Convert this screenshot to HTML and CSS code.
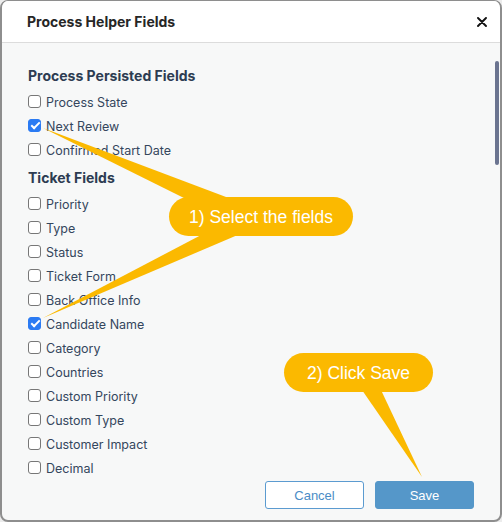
FILE: index.html
```html
<!DOCTYPE html>
<html>
<head>
<meta charset="utf-8">
<link rel="stylesheet" href="styles.css">
</head>
<body>
<div class="dialog">
  <div class="header">
    <span class="title">Process Helper Fields</span>
    <svg class="close" width="10" height="10" viewBox="0 0 10 10"><path d="M1 1L9 9M9 1L1 9" stroke="#111" stroke-width="1.9" stroke-linecap="round"/></svg>
  </div>
  <div class="content">
    <h3 class="section">Process Persisted Fields</h3>
    <label class="row"><input type="checkbox" class="cb"><span>Process State</span></label>
    <label class="row"><input type="checkbox" class="cb" checked><span>Next Review</span></label>
    <label class="row"><input type="checkbox" class="cb"><span>Confirmed Start Date</span></label>
    <h3 class="section second">Ticket Fields</h3>
    <label class="row"><input type="checkbox" class="cb"><span>Priority</span></label>
    <label class="row"><input type="checkbox" class="cb"><span>Type</span></label>
    <label class="row"><input type="checkbox" class="cb"><span>Status</span></label>
    <label class="row"><input type="checkbox" class="cb"><span>Ticket Form</span></label>
    <label class="row"><input type="checkbox" class="cb"><span>Back Office Info</span></label>
    <label class="row"><input type="checkbox" class="cb" checked><span>Candidate Name</span></label>
    <label class="row"><input type="checkbox" class="cb"><span>Category</span></label>
    <label class="row"><input type="checkbox" class="cb"><span>Countries</span></label>
    <label class="row"><input type="checkbox" class="cb"><span>Custom Priority</span></label>
    <label class="row"><input type="checkbox" class="cb"><span>Custom Type</span></label>
    <label class="row"><input type="checkbox" class="cb"><span>Customer Impact</span></label>
    <label class="row"><input type="checkbox" class="cb"><span>Decimal</span></label>
  </div>
  <div class="footer">
    <button class="btn cancel">Cancel</button>
    <button class="btn save">Save</button>
  </div>
  <div class="scrollbar"></div>
</div>
<svg class="callouts" width="502" height="522" viewBox="0 0 502 522">
  <g fill="#fbb900">
    <polygon points="43,128 234,200 188,200"/>
    <polygon points="43,318 203,234 240,234"/>
    <rect x="169" y="197" width="184" height="39" rx="19.5"/>
    <polygon points="362,390 381,390 422,477"/>
    <rect x="284" y="353" width="149" height="39" rx="19.5"/>
  </g>
  <text x="261" y="222.5" class="ctext">1) Select the fields</text>
  <text x="358.5" y="378.5" class="ctext">2) Click Save</text>
</svg>
</body>
</html>
```

FILE: styles.css
```css
html, body {
  margin: 0;
  padding: 0;
  background: #ececec;
}
body {
  width: 502px;
  height: 522px;
  position: relative;
  overflow: hidden;
  font-family: "Inter", "Liberation Sans", sans-serif;
}
.dialog {
  width: 502px;
  height: 522px;
  box-sizing: border-box;
  border: 2px solid #8e8e8e;
  border-top-width: 1px;
  border-radius: 8px;
  background: #f7f8f8;
  display: flex;
  flex-direction: column;
  overflow: hidden;
  position: relative;
}
.header {
  height: 41px;
  flex: none;
  background: #fff;
  border-bottom: 1px solid #dcdcdc;
  display: flex;
  align-items: center;
  justify-content: space-between;
  padding: 0 13px 0 25px;
}
.title {
  font-size: 14px;
  font-weight: 700;
  color: #262626;
}
.close {
  display: block;
  margin-top: 1px;
}
.content {
  flex: 1;
  overflow: hidden;
  padding: 23px 26px 0 26px;
  min-height: 0;
}
.section {
  margin: 0 0 4px 0;
  height: 20px;
  line-height: 20px;
  font-size: 14px;
  font-weight: 700;
  color: #2d3c52;
}
.section.second {
  margin-top: 6px;
}
.row {
  display: flex;
  align-items: center;
  height: 24px;
  gap: 5px;
  font-size: 12.5px;
  color: #34465d;
}
.cb {
  appearance: none;
  -webkit-appearance: none;
  margin: 0;
  width: 13px;
  height: 13px;
  box-sizing: border-box;
  border: 1px solid #777;
  border-radius: 3px;
  background: #fff;
  flex: none;
  position: relative;
  top: -1px;
}
.cb:checked {
  background: #2b7bf3;
  border-color: #2b7bf3;
}
.cb:checked::after {
  content: "";
  position: absolute;
  left: 3.5px;
  top: 0.5px;
  width: 3px;
  height: 7px;
  border-right: 2px solid #fff;
  border-bottom: 2px solid #fff;
  transform: rotate(45deg);
}
.footer {
  height: 42px;
  flex: none;
  display: flex;
  justify-content: flex-end;
  align-items: flex-start;
  gap: 11px;
  padding: 3px 26px 0 0;
  box-sizing: border-box;
}
.btn {
  width: 99px;
  height: 28px;
  border-radius: 3px;
  font-family: "Liberation Sans", "Inter", sans-serif;
  font-size: 13px;
  box-sizing: border-box;
  padding: 0;
}
.cancel {
  background: #fff;
  border: 1px solid #5b9bd0;
  color: #4a8cc6;
}
.save {
  background: #5597c9;
  border: 1px solid #5597c9;
  color: #fff;
}
.scrollbar {
  position: absolute;
  right: 1px;
  top: 60px;
  width: 4px;
  height: 104px;
  border-radius: 2px;
  background: #6b7490;
}
.callouts {
  position: absolute;
  left: 0;
  top: 0;
  pointer-events: none;
}
.ctext {
  font-family: "Liberation Sans", Arial, sans-serif;
  font-size: 17.5px;
  fill: #fff;
  text-anchor: middle;
}
```
